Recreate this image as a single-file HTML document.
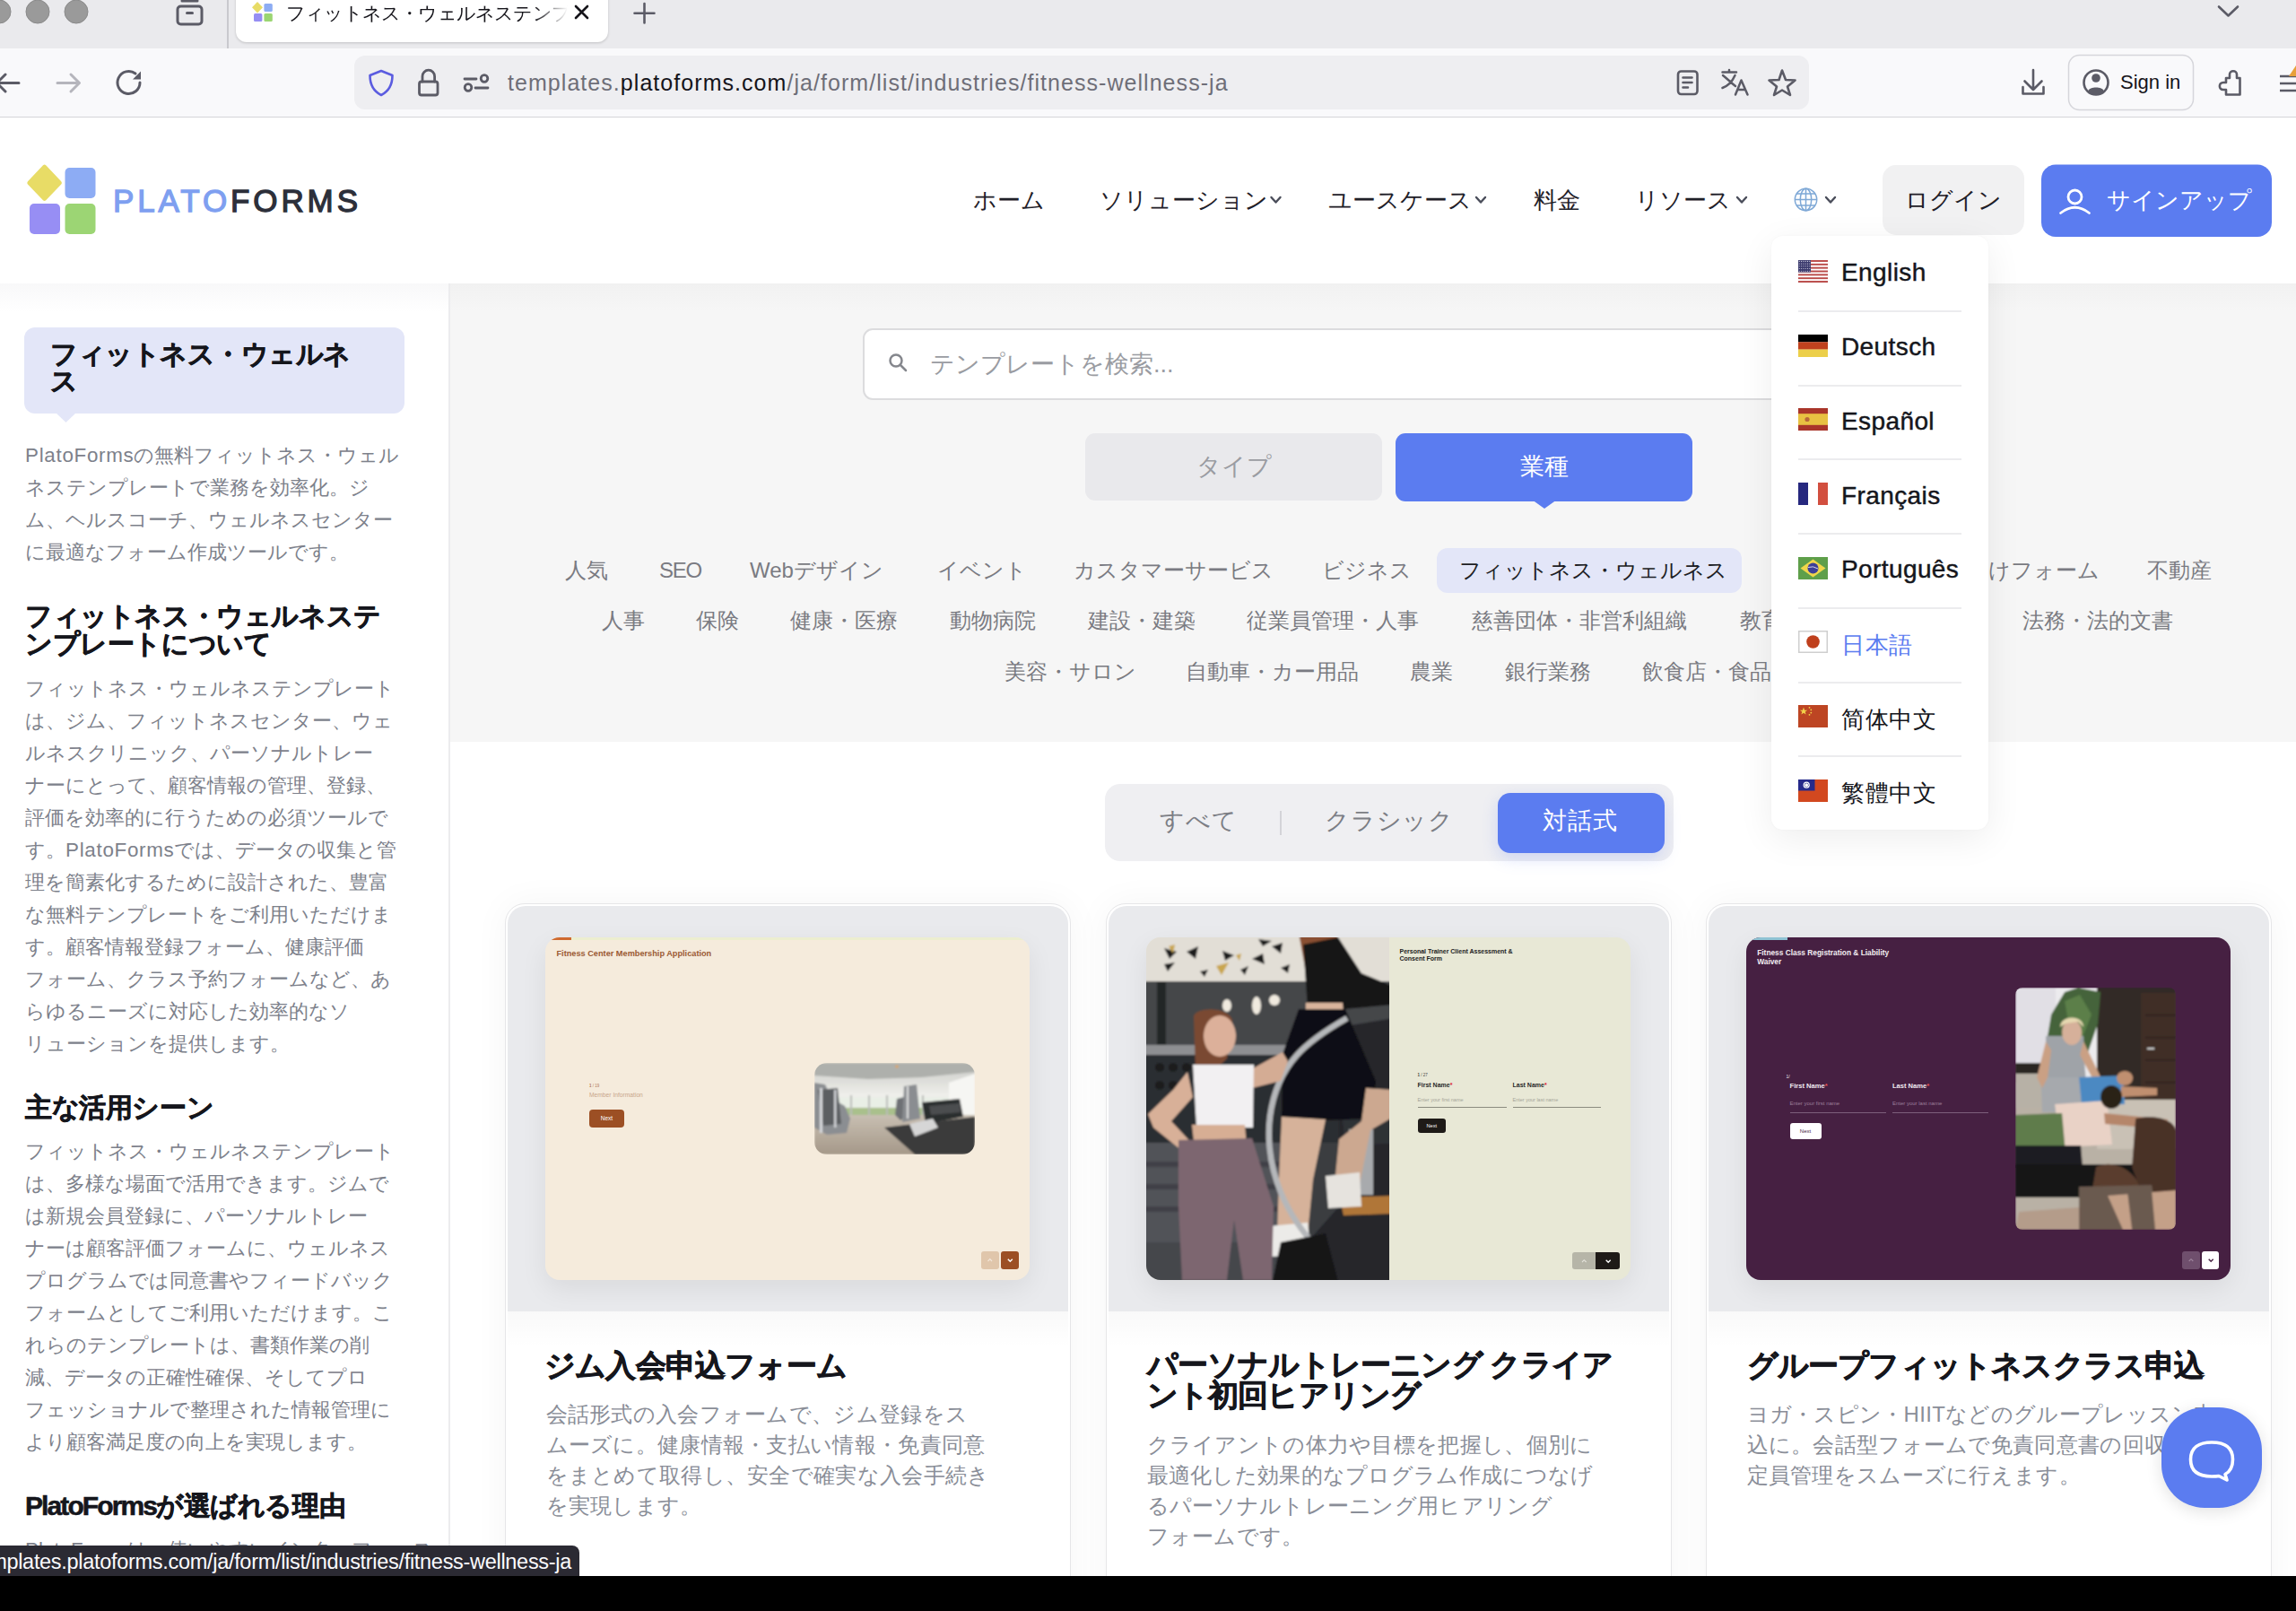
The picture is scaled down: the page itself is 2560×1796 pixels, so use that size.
<!DOCTYPE html>
<html><head><meta charset="utf-8">
<style>
*{box-sizing:border-box;margin:0;padding:0}
html,body{width:2560px;height:1796px;overflow:hidden;background:#fff}
body{position:relative;font-family:"Liberation Sans",sans-serif;color:#1d1d22}
.a{position:absolute}
.nw{white-space:nowrap}
.sp{font-size:22.4px;line-height:36px;color:#7d818b}
.tg{font-size:24px;line-height:32px;color:#7a7b82}
.tg span{top:0}
.dl{font-size:28px;line-height:34px;-webkit-text-stroke:0.45px currentColor;letter-spacing:0.4px}
.sh{font-size:30px;line-height:31px;font-weight:bold;color:#15161c;letter-spacing:-0.4px;-webkit-text-stroke:0.6px #15161c}
</style></head><body>

<!-- ===== Browser chrome ===== -->
<div class="a" style="left:0;top:0;width:2560px;height:54px;background:#eaeaed"></div>
<div class="a" style="left:0;top:54px;width:2560px;height:76px;background:#f9f9fb"></div>
<div class="a" style="left:0;top:130px;width:2560px;height:1px;background:#d4d4d8"></div>
<!-- tab -->
<div class="a" style="left:263px;top:-14px;width:415px;height:61px;background:#fff;border-radius:12px;box-shadow:0 1px 3px rgba(0,0,0,.18)"></div>
<svg class="a" style="left:0;top:0" width="2560" height="131" viewBox="0 0 2560 131">
 <g fill="#9a9a9a" stroke="#8a8a8a" stroke-width="1">
  <circle cx="-1" cy="13" r="13"/><circle cx="42" cy="13" r="13"/><circle cx="85" cy="13" r="13"/>
 </g>
 <g fill="none" stroke="#5b5b66" stroke-width="3" stroke-linecap="round" stroke-linejoin="round">
  <rect x="198" y="7" width="27" height="20" rx="3.5"/>
  <path d="M203 1 L220 1"/>
  <path d="M208.5 14.5 L214.5 14.5"/>
 </g>
 <rect x="253" y="0" width="2" height="54" fill="#c9c9ce"/>
 <!-- favicon -->
 <path d="M287 2 L293 8.2 L287 14.4 L281 8.2 Z" fill="#e8dc66"/>
 <rect x="294.4" y="3.9" width="9.4" height="9" rx="1.5" fill="#8dacf3"/>
 <rect x="283" y="15" width="9.4" height="9" rx="1.5" fill="#968ef3"/>
 <rect x="294.4" y="15" width="9.4" height="9" rx="1.5" fill="#9bd572"/>
 <!-- close x -->
 <path d="M642 7 L655 20 M655 7 L642 20" stroke="#15141a" stroke-width="2.6" stroke-linecap="round"/>
 <!-- plus -->
 <path d="M718.5 4 V25.5 M707.5 14.7 H729.5" stroke="#5b5b66" stroke-width="2.6" stroke-linecap="round"/>
 <!-- top right chevron -->
 <path d="M2474 7.5 L2484.5 17.5 L2495 7.5" fill="none" stroke="#5b5b66" stroke-width="2.6" stroke-linecap="round" stroke-linejoin="round"/>
 <!-- back / forward / reload -->
 <g fill="none" stroke-width="3" stroke-linecap="round" stroke-linejoin="round">
  <path d="M21 92.5 H-2 M6 83 L-3.5 92.5 L6 102" stroke="#5b5b66"/>
  <path d="M64 92.5 H88 M79 83 L88.5 92.5 L79 102" stroke="#b5b5bc"/>
  <path d="M156 92 A12.5 12.5 0 1 1 151 82" stroke="#5b5b66"/>
 </g>
 <path d="M157 79.5 L157 88.5 L148 88.5 Z" fill="#5b5b66"/>
 <!-- address bar -->
 <rect x="395" y="62" width="1622" height="60" rx="12" fill="#eeeef1"/>
 <path d="M425 79 L437.5 84 C437.5 95 433 102 425 106 C417 102 412.5 95 412.5 84 Z" fill="none" stroke="#5b5ce0" stroke-width="2.6" stroke-linejoin="round"/>
 <g fill="none" stroke="#5b5b66" stroke-width="2.8" stroke-linecap="round" stroke-linejoin="round">
  <rect x="467.5" y="91" width="20.5" height="15" rx="2.5"/>
  <path d="M471 91 V85 A6.8 6.8 0 0 1 484.6 85 V91"/>
  <path d="M518 88 H531 M530 98 H544"/>
  <circle cx="540" cy="87.5" r="3.8"/>
  <circle cx="522" cy="97.5" r="3.8"/>
 </g>
 <!-- right urlbar icons -->
 <g fill="none" stroke="#5b5b66" stroke-width="2.6" stroke-linecap="round" stroke-linejoin="round">
  <rect x="1871" y="79.5" width="21.5" height="25.5" rx="3.5"/>
  <path d="M1876.5 86.5 H1886.5 M1876.5 92 H1886.5 M1876.5 97.5 H1882"/>
  <path d="M1972.5 89.5 L1983.5 89 L1987 78.5 L1991 89 L2001.5 89.5 L1993 96.5 L1996 106 L1987 100.5 L1978 106 L1981 96.5 Z"/>
  <path d="M2267 78 V99 M2257.5 90.5 L2267 100 L2276.5 90.5 M2255.5 97 V104.5 H2278.5 V97"/>
 </g>
 <g fill="none" stroke="#5b5b66" stroke-width="2.5" stroke-linecap="round" stroke-linejoin="round">
  <path d="M1920.5 80.5 H1936 M1928 78 V80.5 M1921 84 C1926 88 1931 93 1935 96 M1934.5 84 C1931 92 1926 96 1920.5 98"/>
  <path d="M1935 105.5 L1941.5 89.5 L1948.5 105.5 M1937.5 100 H1946"/>
 </g>
 <!-- sign in button -->
 <rect x="2306.5" y="61.5" width="139" height="61" rx="12" fill="#f9f9fb" stroke="#d6d6db" stroke-width="1.5"/>
 <circle cx="2337" cy="92" r="13.5" fill="none" stroke="#5b5b66" stroke-width="2.6"/>
 <circle cx="2337" cy="87" r="4.8" fill="#5b5b66"/>
 <path d="M2328 101.5 C2330 96 2344 96 2346 101.5 A13 13 0 0 1 2328 101.5 Z" fill="#5b5b66"/>
 <!-- extensions -->
 <path d="M2482 87 H2486 V83 C2486 78 2494 78 2494 83 V87 H2497.5 V105.5 H2482 V100 H2479 C2473.5 100 2473.5 92 2479 92 H2482 Z" fill="none" stroke="#5b5b66" stroke-width="2.6" stroke-linejoin="round"/>
 <!-- menu -->
 <path d="M2542 85 H2560 M2542 93 H2560 M2542 101 H2560" stroke="#5b5b66" stroke-width="2.6"/>
 <path d="M2552 85 L2560 73 L2560 85 Z" fill="#e8a03a"/>
</svg>
<div class="a nw" style="left:319px;top:1px;width:314px;height:27px;overflow:hidden;font-size:21px;line-height:27px;letter-spacing:-0.8px;color:#15141a;-webkit-mask-image:linear-gradient(to right,#000 88%,transparent 100%)">フィットネス・ウェルネステンプレート</div>
<div class="a nw" style="left:566px;top:75px;font-size:25px;line-height:34px;color:#6e6e78;letter-spacing:1.05px">templates.<span style="color:#15141a">platoforms.com</span>/ja/form/list/industries/fitness-wellness-ja</div>
<div class="a nw" style="left:2364px;top:77px;font-size:22px;line-height:30px;color:#15141a">Sign in</div>

<!-- ===== Header ===== -->
<div class="a" style="left:0;top:131px;width:2560px;height:185px;background:#fff"></div>
<svg class="a" style="left:0;top:131px" width="2560" height="185" viewBox="0 131 2560 185">
 <path d="M49.6 184 Q50.5 183.2 51.4 184 L68.4 201.9 Q69.3 202.9 68.4 203.9 L51.4 221.6 Q50.5 222.5 49.6 221.6 L32.6 203.9 Q31.7 202.9 32.6 201.9 Z" fill="#e8dc66" stroke="#e8dc66" stroke-width="2" stroke-linejoin="round" transform="translate(-0.9 1)"/>
 <rect x="72.5" y="187" width="34" height="34" rx="5" fill="#8dacf4"/>
 <rect x="33" y="227" width="34" height="34" rx="5" fill="#978ef4"/>
 <rect x="72.5" y="227" width="34" height="34" rx="5" fill="#9cd574"/>
 <!-- chevrons -->
 <g fill="none" stroke="#4a4d5a" stroke-width="2.4" stroke-linecap="round" stroke-linejoin="round">
  <path d="M1417.5 220 L1422.5 225.5 L1427.5 220"/>
  <path d="M1646 220 L1651 225.5 L1656 220"/>
  <path d="M1937 220 L1942 225.5 L1947 220"/>
  <path d="M2036 220 L2041 225.5 L2046 220"/>
 </g>
 <!-- globe -->
 <g fill="none" stroke="#7ea8d6" stroke-width="1.5">
  <circle cx="2013.5" cy="222.5" r="12.2"/>
  <ellipse cx="2013.5" cy="222.5" rx="6.2" ry="12.2"/>
  <path d="M2001.5 222.5 H2025.5 M2003 216 H2024 M2003 229 H2024 M2013.5 210.5 V234.5"/>
 </g>
 <!-- buttons -->
 <rect x="2099" y="184" width="158" height="78" rx="15" fill="#f1f1f2"/>
 <rect x="2276" y="183.5" width="257" height="80.5" rx="16" fill="#5b7cf0"/>
 <g fill="none" stroke="#fff" stroke-width="2.8" stroke-linecap="round">
  <circle cx="2313.5" cy="219.5" r="7.5"/>
  <path d="M2297.5 237.5 Q2313.5 225 2329.5 237.5"/>
 </g>
</svg>
<div class="a nw" style="left:126px;top:204px;font-size:35px;line-height:40px;letter-spacing:3.9px;-webkit-text-stroke:1.3px currentColor;color:#7e9ff0">PLATO<span style="color:#2c2f3a">FORMS</span></div>
<div class="a nw" style="top:207px;font-size:26px;line-height:32px;color:#1f2028">
 <span class="a" style="left:1085px">ホーム</span>
 <span class="a" style="left:1226px">ソリューション</span>
 <span class="a" style="left:1481px">ユースケース</span>
 <span class="a" style="left:1710px">料金</span>
 <span class="a" style="left:1823px">リソース</span>
 <span class="a" style="left:2124px">ログイン</span>
 <span class="a" style="left:2349px;color:#fff">サインアップ</span>
</div>

<!-- ===== Sidebar ===== -->
<div class="a" style="left:0;top:316px;width:500px;height:1480px;background:#fff"></div>
<div class="a" style="left:0;top:316px;width:500px;height:32px;background:linear-gradient(#f8f8f9,rgba(255,255,255,0))"></div>
<div class="a" style="left:500px;top:316px;width:2px;height:1480px;background:#ececee"></div>
<div class="a" style="left:27px;top:365px;width:424px;height:96px;background:#e3e6f8;border-radius:12px"></div>
<svg class="a" style="left:60px;top:460px" width="28" height="12"><path d="M2 0 L13.5 11 L25 0 Z" fill="#e3e6f8"/></svg>
<div class="a" style="left:56px;top:380px;font-size:30px;line-height:30px;font-weight:bold;color:#15161c;letter-spacing:-0.5px;-webkit-text-stroke:0.6px #15161c">フィットネス・ウェルネ<br>ス</div>
<div class="a nw sp" style="left:28px;top:490px"><span style="letter-spacing:0.7px">PlatoForms</span>の無料フィットネス・ウェル<br>ネステンプレートで業務を効率化。ジ<br>ム、ヘルスコーチ、ウェルネスセンター<br>に最適なフォーム作成ツールです。</div>
<div class="a nw sh" style="left:28px;top:671px">フィットネス・ウェルネステ<br>ンプレートについて</div>
<div class="a nw sp" style="left:28px;top:750px">フィットネス・ウェルネステンプレート<br>は、ジム、フィットネスセンター、ウェ<br>ルネスクリニック、パーソナルトレー<br>ナーにとって、顧客情報の管理、登録、<br>評価を効率的に行うための必須ツールで<br>す。<span style="letter-spacing:0.7px">PlatoForms</span>では、データの収集と管<br>理を簡素化するために設計された、豊富<br>な無料テンプレートをご利用いただけま<br>す。顧客情報登録フォーム、健康評価<br>フォーム、クラス予約フォームなど、あ<br>らゆるニーズに対応した効率的なソ<br>リューションを提供します。</div>
<div class="a nw sh" style="left:28px;top:1219px">主な活用シーン</div>
<div class="a nw sp" style="left:28px;top:1266px">フィットネス・ウェルネステンプレート<br>は、多様な場面で活用できます。ジムで<br>は新規会員登録に、パーソナルトレー<br>ナーは顧客評価フォームに、ウェルネス<br>プログラムでは同意書やフィードバック<br>フォームとしてご利用いただけます。こ<br>れらのテンプレートは、書類作業の削<br>減、データの正確性確保、そしてプロ<br>フェッショナルで整理された情報管理に<br>より顧客満足度の向上を実現します。</div>
<div class="a nw sh" style="left:28px;top:1663px"><span style="letter-spacing:-1.9px">PlatoForms</span>が選ばれる理由</div>
<div class="a nw sp" style="left:28px;top:1710px">PlatoFormsは、使いやすいインターフェース</div>

<!-- ===== Main ===== -->
<div class="a" style="left:502px;top:316px;width:2058px;height:511px;background:linear-gradient(#f1f1f1,#f6f6f6 30px)"></div>
<div class="a" style="left:502px;top:827px;width:2058px;height:969px;background:#fff"></div>
<!-- search -->
<div class="a" style="left:962px;top:366px;width:1174px;height:80px;background:#fff;border:2px solid #dcdcde;border-radius:11px"></div>
<svg class="a" style="left:988px;top:391px" width="28" height="28"><g fill="none" stroke="#85878d" stroke-width="2.5" stroke-linecap="round"><circle cx="11" cy="11" r="6.5"/><path d="M16 16 L22 22"/></g></svg>
<div class="a nw" style="left:1037px;top:390px;font-size:27px;line-height:32px;color:#9a9ca2">テンプレートを検索...</div>
<!-- type / industry tabs -->
<div class="a" style="left:1210px;top:483px;width:331px;height:75px;background:#e9e9ec;border-radius:11px"></div>
<div class="a" style="left:1556px;top:483px;width:331px;height:76px;background:#5b7cf0;border-radius:11px"></div>
<svg class="a" style="left:1706px;top:557px" width="32" height="12"><path d="M2 0 L16 10 L30 0 Z" fill="#5b7cf0"/></svg>
<div class="a nw" style="left:1210px;top:502px;width:331px;text-align:center;font-size:27px;line-height:36px;color:#9a9ca2">タイプ</div>
<div class="a nw" style="left:1556px;top:502px;width:331px;text-align:center;font-size:27px;line-height:36px;color:#fff">業種</div>
<!-- tags -->
<div class="a" style="left:1602px;top:611px;width:340px;height:50px;background:#e3e6f8;border-radius:12px"></div>
<div class="a nw tg" style="top:620px">
 <span class="a" style="left:630px">人気</span>
 <span class="a" style="left:735px;letter-spacing:-1.2px">SEO</span>
 <span class="a" style="left:836px">Webデザイン</span>
 <span class="a" style="left:1045px">イベント</span>
 <span class="a" style="left:1197px">カスタマーサービス</span>
 <span class="a" style="left:1474px">ビジネス</span>
 <span class="a" style="left:1627px;color:#1d1e24">フィットネス・ウェルネス</span>
 <span class="a" style="left:2169px">受付けフォーム</span>
 <span class="a" style="left:2394px">不動産</span>
</div>
<div class="a nw tg" style="top:676px">
 <span class="a" style="left:671px">人事</span>
 <span class="a" style="left:776px">保険</span>
 <span class="a" style="left:881px">健康・医療</span>
 <span class="a" style="left:1059px">動物病院</span>
 <span class="a" style="left:1213px">建設・建築</span>
 <span class="a" style="left:1390px">従業員管理・人事</span>
 <span class="a" style="left:1641px">慈善団体・非営利組織</span>
 <span class="a" style="left:1940px">教育</span>
 <span class="a" style="left:2255px">法務・法的文書</span>
</div>
<div class="a nw tg" style="top:733px">
 <span class="a" style="left:1120px">美容・サロン</span>
 <span class="a" style="left:1322px">自動車・カー用品</span>
 <span class="a" style="left:1572px">農業</span>
 <span class="a" style="left:1678px">銀行業務</span>
 <span class="a" style="left:1831px">飲食店・食品</span>
</div>

<!-- toggle -->
<div class="a" style="left:1232px;top:874px;width:634px;height:86px;background:#efeff2;border-radius:17px"></div>
<div class="a" style="left:1670px;top:884px;width:186px;height:67px;background:#5b7cf0;border-radius:14px;box-shadow:0 6px 18px rgba(91,124,240,.22)"></div>
<div class="a" style="left:1427px;top:904px;width:2px;height:27px;background:#d3d3d8"></div>
<div class="a nw" style="top:898px;font-size:27px;line-height:34px;color:#7c7e85;letter-spacing:0.8px">
 <span class="a" style="left:1293px">すべて</span>
 <span class="a" style="left:1477px">クラシック</span>
 <span class="a" style="left:1720px;color:#fff">対話式</span>
</div>
<!-- CARDS -->
<style>
.card{position:absolute;top:1007px;width:631px;height:820px;background:#fff;border:1.5px solid #e6e6e8;border-radius:22px;box-shadow:0 0 40px rgba(0,0,0,.045)}
.prev{position:absolute;left:2px;top:2px;right:2px;height:452px;background:#e9eaed;border-radius:20px 20px 0 0}
.pin{position:absolute;left:43.5px;top:36.5px;width:540px;height:382px;border-radius:16px;overflow:hidden;box-shadow:0 10px 30px rgba(0,0,0,.07)}
.ctl{position:absolute;font-size:34px;line-height:34px;font-weight:bold;color:#15161c;letter-spacing:-0.8px;-webkit-text-stroke:0.7px #15161c;white-space:nowrap}
.cds{position:absolute;font-size:24px;line-height:34px;color:#8a8e98;letter-spacing:0.3px;white-space:nowrap}
.fx{position:absolute;white-space:nowrap;font-family:"Liberation Sans",sans-serif}
</style>
<div class="card" style="left:563px">
 <div class="prev"></div>
 <div class="a" style="left:2px;top:454px;right:2px;height:40px;background:linear-gradient(rgba(0,0,0,.025),rgba(0,0,0,0))"></div>
 <div class="pin" style="background:#f5ebdc" id="p1"><div class="a" style="left:0;top:0;width:540px;height:3px;background:#eceecf"></div>
 <div class="a" style="left:0;top:0;width:29px;height:3px;background:#cf6a30"></div>
 <div class="fx" style="left:13px;top:12px;font-size:9.2px;line-height:12px;font-weight:bold;color:#9b5a34">Fitness Center Membership Application</div>
 <div class="fx" style="left:49.5px;top:163px;font-size:4.5px;line-height:6px;color:#b07a58"><b>1</b> / 19</div>
 <div class="fx" style="left:49.5px;top:171px;font-size:6.7px;line-height:9px;color:#c9a68c">Member Information</div>
 <div class="a" style="left:49.5px;top:192px;width:39px;height:20px;background:#9c4f24;border-radius:4px"></div>
 <div class="fx" style="left:49.5px;top:196px;width:39px;text-align:center;font-size:6.5px;line-height:12px;color:#fff">Next</div>
 <svg class="a" style="left:300px;top:140.5px" width="179" height="102" viewBox="0 0 179 102">
  <defs><clipPath id="c1"><rect width="179" height="102" rx="14"/></clipPath>
  <linearGradient id="g1a" x1="0" y1="0" x2="0" y2="1"><stop offset="0" stop-color="#c9cac6"/><stop offset="0.35" stop-color="#eeeeea"/><stop offset="1" stop-color="#f4f4f0"/></linearGradient>
  <linearGradient id="g1f" x1="0" y1="0" x2="0" y2="1"><stop offset="0" stop-color="#c8bfb2"/><stop offset="1" stop-color="#a59889"/></linearGradient></defs>
  <g clip-path="url(#c1)"><g filter="url(#bl3)">
   <rect width="179" height="102" fill="url(#g1a)"/>
   <path d="M0 0 H179 V10 L120 16 L60 18 L0 14 Z" fill="#aeb0ac"/>
   <rect x="0" y="38" width="179" height="18" fill="#e9efe6"/>
   <rect x="0" y="50" width="179" height="8" fill="#a9c08c"/>
   <g fill="#b9bcb8"><rect x="40" y="36" width="2" height="22"/><rect x="60" y="36" width="2" height="22"/><rect x="80" y="36" width="2" height="22"/><rect x="120" y="36" width="2" height="22"/><rect x="150" y="36" width="2" height="22"/></g>
   <path d="M150 22 L179 12 V62 L150 58 Z" fill="#f6f6f3"/>
   <path d="M0 58 H179 V102 H0 Z" fill="url(#g1f)"/>
   <path d="M78 72 L179 60 V102 H112 Z" fill="#3a3a3b"/>
   <path d="M0 22 L12 24 L20 40 L34 48 L40 62 L36 78 L14 80 L0 72 Z" fill="#8b8e92"/>
   <path d="M4 30 L26 28 L30 68 L10 70 Z" fill="#5b5e62"/>
   <rect x="6" y="28" width="3" height="50" fill="#d5d7da"/>
   <rect x="22" y="30" width="2.5" height="42" fill="#d0d2d5"/>
   <path d="M92 40 L100 38 L104 58 L96 64 L90 58 Z" fill="#6e7175"/>
   <path d="M100 26 L114 24 L118 62 L98 66 Z" fill="#8a8d91"/>
   <rect x="103" y="26" width="2" height="36" fill="#dcdcdc"/>
   <path d="M120 44 L162 40 L166 60 L124 68 Z" fill="#2c2d2f"/>
   <path d="M128 48 L162 45 L163 55 L130 58 Z" fill="#4b4d50"/>
   <path d="M106 68 L132 62 L138 72 L112 82 Z" fill="#d6d6d6"/>
   <circle cx="92" cy="4" r="1.5" fill="#e8a050"/>
  </g>
 </g></svg>
 <div class="a" style="left:486.5px;top:350.5px;width:19.5px;height:19.8px;background:#e0c6ab;border-radius:3px"></div>
 <div class="a" style="left:508.6px;top:350.5px;width:19.5px;height:19.8px;background:#9c4f24;border-radius:3px"></div>
 <svg class="a" style="left:486.5px;top:350.5px" width="42" height="20"><path d="M7.5 11 L9.8 8.7 L12 11" stroke="#f3e6d8" stroke-width="1.2" fill="none"/><path d="M29.8 8.8 L32.3 11.3 L34.8 8.8" stroke="#fff" stroke-width="1.5" fill="none"/></svg></div>
 <div class="ctl" style="left:43px;top:497px">ジム入会申込フォーム</div>
 <div class="cds" style="left:44.5px;top:552px">会話形式の入会フォームで、ジム登録をス<br>ムーズに。健康情報・支払い情報・免責同意<br>をまとめて取得し、安全で確実な入会手続き<br>を実現します。</div>
</div>
<div class="card" style="left:1233px">
 <div class="prev"></div>
 <div class="a" style="left:2px;top:454px;right:2px;height:40px;background:linear-gradient(rgba(0,0,0,.025),rgba(0,0,0,0))"></div>
 <div class="pin" style="background:#e8e8d6" id="p2"><svg class="a" style="left:0;top:0" width="271" height="382" viewBox="0 0 271 382">
  <defs><filter id="bl2" x="-5%" y="-5%" width="110%" height="110%"><feGaussianBlur stdDeviation="1.1"/></filter></defs>
  <g filter="url(#bl2)">
  <rect x="-5" y="-5" width="281" height="392" fill="#3a3c41"/>
  <rect x="-5" y="-5" width="281" height="54" fill="#e2ded6"/>
  <g fill="#1e1e1e"><path d="M20 12 L34 16 L26 24Z"/><path d="M45 16 L58 10 L55 24Z"/><path d="M85 15 L98 20 L88 26Z"/><path d="M118 24 L130 18 L132 30Z"/><path d="M20 30 L32 28 L24 38Z"/><path d="M140 10 L152 6 L150 18Z"/><path d="M105 36 L114 32 L110 42Z"/><path d="M60 38 L69 36 L65 44Z"/><path d="M150 34 L160 30 L158 40Z"/><path d="M125 2 L140 4 L130 10Z"/></g>
  <g fill="#c9a650"><path d="M78 32 L92 28 L84 42Z"/><path d="M25 10 L32 8 L30 18Z"/><path d="M100 20 L106 18 L104 26Z"/></g>
  <rect x="-5" y="49" width="281" height="82" fill="#45464a"/>
  <rect x="12" y="49" width="10" height="82" fill="#242528"/>
  <rect x="-5" y="120" width="281" height="12" fill="#8e8f92"/>
  <g fill="#f0eadf"><ellipse cx="90" cy="76" rx="5" ry="7"/><ellipse cx="123" cy="76" rx="5" ry="10"/><ellipse cx="143" cy="70" rx="6" ry="6"/><ellipse cx="60" cy="92" rx="3" ry="8"/></g>
  <rect x="-5" y="131" width="281" height="98" fill="#2c2d31"/>
  <g fill="#1a1b1e"><circle cx="15" cy="145" r="5"/><circle cx="30" cy="145" r="5"/><circle cx="45" cy="145" r="5"/><circle cx="15" cy="165" r="5"/><circle cx="30" cy="165" r="5"/></g>
  <rect x="-5" y="229" width="160" height="160" fill="#515358"/>
  <g fill="#3f4146"><rect x="-5" y="250" width="160" height="6"/><rect x="-5" y="275" width="160" height="6"/><rect x="-5" y="300" width="160" height="6"/></g>
  <rect x="-5" y="340" width="160" height="50" fill="#45474c"/>
  <!-- machine right -->
  <path d="M215 100 L276 90 V387 H150 L175 345 L215 300 Z" fill="#26272b"/>
  <path d="M220 180 L276 176 V195 L218 198 Z" fill="#c08040"/>
  <path d="M218 197 L276 195 V230 L222 232 Z" fill="#2e3036"/>
  <path d="M216 290 L276 288 V308 L220 310 Z" fill="#b07638"/>
  <rect x="226" y="214" width="27" height="73" fill="#a8aaad"/>
  <!-- woman 2 -->
  <path d="M170 -5 H214 L208 44 L180 50 Z" fill="#8a5030"/>
  <path d="M175 8 L214 0 L240 40 L276 55 V75 L220 80 L180 80 Z" fill="#131315"/>
  <path d="M178 73 L219 73 L220 84 L178 84 Z" fill="#d8b49c"/>
  <path d="M170 80 L222 80 L256 160 L255 202 L200 204 L151 200 L152 130 Z" fill="#101012"/>
  <path d="M151 200 L200 203 L186 270 L180 331 L146 331 L148 270 Z" fill="#d6b29a"/>
  <path d="M245 168 L276 170 V200 L250 215 L238 275 L210 275 L215 225 L240 205 Z" fill="#cca890"/>
  <path d="M136 322 L180 318 L184 354 L138 356 Z" fill="#ecebe8"/>
  <path d="M200 266 L238 262 L240 300 L203 302 Z" fill="#e6e3de"/>
  <path d="M224 90 C180 115 146 140 138 200 C132 250 150 300 185 340" fill="none" stroke="#b5b7ba" stroke-width="6.5"/>
  <path d="M150 340 L200 330 L215 387 H140 Z" fill="#141416"/>
  <!-- woman 1 -->
  <path d="M53 88 C55 78 90 76 96 92 L90 135 L75 150 L55 150 Z" fill="#7a4a30"/>
  <ellipse cx="82" cy="110" rx="18" ry="23" fill="#dcb09a"/>
  <path d="M46 150 L30 170 L2 197 L8 212 L40 238 L56 235 L28 205 L52 178 Z" fill="#d8b098"/>
  <path d="M110 151 L152 128 L158 138 L150 160 L118 168 Z" fill="#d4ac94"/>
  <path d="M52 142 L120 142 L119 212 L56 212 Z" fill="#f2f0f2"/>
  <path d="M51 209 L110 209 L112 234 L54 236 Z" fill="#d7ae94"/>
  <path d="M36 226 L118 224 L142 300 L140 382 H108 L98 315 L90 382 H40 L36 300 Z" fill="#7d6670"/>
  </g>
 </svg>
 <div class="fx" style="left:283px;top:12px;font-size:7px;line-height:8.6px;font-weight:bold;color:#222">Personal Trainer Client Assessment &amp;<br>Consent Form</div>
 <div class="fx" style="left:303px;top:151px;font-size:4.5px;line-height:6px;color:#444"><b>1</b> / 27</div>
 <div class="fx" style="left:303px;top:160px;font-size:7px;line-height:9px;font-weight:bold;color:#2a2a2a">First Name<span style="color:#d23">*</span></div>
 <div class="fx" style="left:409px;top:160px;font-size:7px;line-height:9px;font-weight:bold;color:#2a2a2a">Last Name<span style="color:#d23">*</span></div>
 <div class="fx" style="left:303px;top:178px;font-size:5.5px;line-height:7px;color:#a5a598">Enter your first name</div>
 <div class="fx" style="left:409px;top:178px;font-size:5.5px;line-height:7px;color:#a5a598">Enter your last name</div>
 <div class="a" style="left:303px;top:189.5px;width:99px;height:1px;background:#8c8c80"></div>
 <div class="a" style="left:409px;top:189.5px;width:98.6px;height:1px;background:#8c8c80"></div>
 <div class="a" style="left:303px;top:202px;width:31.7px;height:16.3px;background:#1e1a17;border-radius:3px"></div>
 <div class="fx" style="left:303px;top:205px;width:31.7px;text-align:center;font-size:5.6px;line-height:10px;color:#fff">Next</div>
 <div class="a" style="left:475px;top:351px;width:26.5px;height:19.3px;background:#b6b5a8;border-radius:3px 0 0 3px"></div>
 <div class="a" style="left:501.5px;top:351px;width:26.5px;height:19.3px;background:#1e1a17;border-radius:0 3px 3px 0"></div>
 <svg class="a" style="left:475px;top:351px" width="53" height="20"><path d="M11 11 L13.3 8.7 L15.6 11" stroke="#e4e3da" stroke-width="1.1" fill="none"/><path d="M37.7 8.8 L40.2 11.3 L42.7 8.8" stroke="#fff" stroke-width="1.4" fill="none"/></svg></div>
 <div class="ctl" style="left:44.5px;top:496px">パーソナルトレーニング クライア<br>ント初回ヒアリング</div>
 <div class="cds" style="left:44.5px;top:586px">クライアントの体力や目標を把握し、個別に<br>最適化した効果的なプログラム作成につなげ<br>るパーソナルトレーニング用ヒアリング<br>フォームです。</div>
</div>
<div class="card" style="left:1902px">
 <div class="prev"></div>
 <div class="a" style="left:2px;top:454px;right:2px;height:40px;background:linear-gradient(rgba(0,0,0,.025),rgba(0,0,0,0))"></div>
 <div class="pin" style="background:#462042" id="p3"><div class="a" style="left:3px;top:0;width:43px;height:3px;background:#8fc3d4"></div>
 <div class="fx" style="left:12.7px;top:12.5px;font-size:8.35px;line-height:10px;font-weight:bold;color:#f2edf2">Fitness Class Registration &amp; Liability<br>Waiver</div>
 <div class="fx" style="left:45px;top:152px;font-size:5px;line-height:7px;color:#e8e0e8">1/</div>
 <div class="fx" style="left:49px;top:161px;font-size:7.6px;line-height:10px;font-weight:bold;color:#efe8ef">First Name<span style="color:#e55">*</span></div>
 <div class="fx" style="left:163.4px;top:161px;font-size:7.6px;line-height:10px;font-weight:bold;color:#efe8ef">Last Name<span style="color:#e55">*</span></div>
 <div class="fx" style="left:49px;top:181px;font-size:6px;line-height:8px;color:#9c7f9a">Enter your first name</div>
 <div class="fx" style="left:163.4px;top:181px;font-size:6px;line-height:8px;color:#9c7f9a">Enter your last name</div>
 <div class="a" style="left:49px;top:195px;width:107px;height:1px;background:#7d5f7b"></div>
 <div class="a" style="left:163.4px;top:195px;width:107px;height:1px;background:#7d5f7b"></div>
 <div class="a" style="left:49px;top:207px;width:35px;height:18.5px;background:#fff;border-radius:3px"></div>
 <div class="fx" style="left:49px;top:211px;width:35px;text-align:center;font-size:6px;line-height:10px;color:#462042">Next</div>
 <svg class="a" style="left:300px;top:56.8px" width="179.2" height="270" viewBox="0 0 179 270">
  <defs><clipPath id="c3"><rect width="179" height="270" rx="8"/></clipPath><filter id="bl3"><feGaussianBlur stdDeviation="0.9"/></filter></defs>
  <g clip-path="url(#c3)"><g filter="url(#bl3)">
   <rect width="179" height="270" fill="#b9b1a5"/>
   <rect x="0" y="0" width="91" height="130" fill="#e1dfe5"/>
   <rect x="45" y="0" width="46" height="130" fill="#ecebee"/>
   <rect x="91" y="0" width="88" height="125" fill="#302a26"/>
   <rect x="140" y="6" width="39" height="120" fill="#3f2f27"/>
   <g fill="#2a211c"><rect x="145" y="30" width="34" height="1.5"/><rect x="145" y="55" width="34" height="1.5"/><rect x="145" y="80" width="34" height="1.5"/><rect x="145" y="105" width="34" height="1.5"/></g>
   <rect x="147" y="67" width="8" height="2" fill="#c8c8c8"/>
   <path d="M40 30 L55 5 L70 0 L95 5 L92 40 L80 75 L62 90 L45 80 L35 60 Z" fill="#44643a"/>
   <path d="M55 15 L72 8 L85 30 L75 55 L60 45 Z" fill="#5b7f48"/>
   <rect x="0" y="84" width="28" height="22" fill="#2a2624"/>
   <rect x="0" y="96" width="34" height="38" fill="#b7b1a6"/>
   <rect x="91" y="125" width="88" height="55" fill="#c9c1b5"/>
   <path d="M28 93 L78 93 L80 139 L30 139 Z" fill="#a6a9ad"/>
   <path d="M34 54 L76 54 L78 100 L34 100 Z" fill="#9fa3a8"/>
   <ellipse cx="63" cy="50" rx="11" ry="14" fill="#d6b09a"/>
   <path d="M50 44 C50 30 76 30 76 44 L70 38 L56 40 Z" fill="#e6d8b0"/>
   <path d="M34 60 L24 100 L30 112 L36 100 L40 70 Z" fill="#caa084"/>
   <path d="M76 60 L100 110 L95 118 L72 75 Z" fill="#caa084"/>
   <path d="M71 100 L120 98 L122 130 L74 132 Z" fill="#4b89c2"/>
   <ellipse cx="122" cy="101" rx="9" ry="8" fill="#c08f70"/>
   <path d="M118 110 L158 112 L158 120 L118 122 Z" fill="#c08f70"/>
   <path d="M44 130 L102 126 L108 175 L50 178 Z" fill="#e9d2c6"/>
   <ellipse cx="107" cy="122" rx="12" ry="13" fill="#2c2019"/>
   <path d="M99 140 L170 147 L168 158 L100 152 Z" fill="#b5866a"/>
   <path d="M0 142 L52 140 L56 185 L40 192 L0 180 Z" fill="#5f7b4b"/>
   <path d="M0 176 L73 176 L75 201 L0 201 Z" fill="#1e1d20"/>
   <path d="M0 197 L140 197 L140 234 L0 234 Z" fill="#151417"/>
   <rect x="0" y="234" width="179" height="36" fill="#b9b1a5"/>
   <path d="M4 250 L71 245 L71 270 L0 270 Z" fill="#b49c8a"/>
   <path d="M90 200 C110 190 134 205 140 224 L103 240 L85 230 Z" fill="#5a3e2e"/>
   <path d="M134 146 C160 140 179 150 179 160 V230 L140 228 L130 200 Z" fill="#4a3226"/>
   <path d="M71 222 L152 220 L160 270 H71 Z" fill="#6a5a50"/>
   <path d="M103 232 L179 226 V270 H120 Z" fill="#c4a088"/>
   <path d="M125 228 L152 226 L156 270 L130 270 Z" fill="#6a5a50"/>
  </g>
 </g></svg>
 <div class="a" style="left:486px;top:350.8px;width:20px;height:19.7px;background:#6f4f6d;border-radius:3px"></div>
 <div class="a" style="left:508.4px;top:350.8px;width:19.6px;height:19.7px;background:#fff;border-radius:3px"></div>
 <svg class="a" style="left:486px;top:350.8px" width="42" height="20"><path d="M7.7 11 L10 8.7 L12.3 11" stroke="#9e849c" stroke-width="1.1" fill="none"/><path d="M29.7 8.8 L32.2 11.3 L34.7 8.8" stroke="#462042" stroke-width="1.5" fill="none"/></svg></div>
 <div class="ctl" style="left:44.5px;top:497px">グループフィットネスクラス申込</div>
 <div class="cds" style="left:44.5px;top:552px">ヨガ・スピン・HIITなどのグループレッスン申<br>込に。会話型フォームで免責同意書の回収や<br>定員管理をスムーズに行えます。</div>
</div>
<!-- chat -->
<div class="a" style="left:2410px;top:1569px;width:112px;height:112px;background:#5b7cf0;border-radius:48px;box-shadow:0 4px 18px rgba(0,0,0,.12)"></div>
<svg class="a" style="left:2410px;top:1569px" width="112" height="112" viewBox="0 0 112 112"><path d="M56 39 C70 39 79.5 44.5 79.5 58 C79.5 67 76 72 71 74.5 L73 81 L64 76.5 C61.5 77 59 77 56 77 C42 77 32.5 71.5 32.5 58 C32.5 44.5 42 39 56 39 Z" fill="none" stroke="#fff" stroke-width="3.6" stroke-linejoin="round"/></svg>
<!-- DROPDOWN -->
<div class="a" style="left:1975px;top:263px;width:242px;height:662px;background:#fff;border-radius:13px;box-shadow:0 10px 40px rgba(0,0,0,.07),0 0 3px rgba(0,0,0,.03)"></div>
<svg class="a" style="left:2005px;top:290px" width="33" height="25" viewBox="0 0 33 25"><rect width="33" height="25" fill="#fff"/><rect y="0.00" width="33" height="1.92" fill="#b94a48"/><rect y="3.85" width="33" height="1.92" fill="#b94a48"/><rect y="7.69" width="33" height="1.92" fill="#b94a48"/><rect y="11.54" width="33" height="1.92" fill="#b94a48"/><rect y="15.38" width="33" height="1.92" fill="#b94a48"/><rect y="19.23" width="33" height="1.92" fill="#b94a48"/><rect y="23.08" width="33" height="1.92" fill="#b94a48"/><rect width="14" height="13.5" fill="#3c3b6e"/><circle cx="1.3" cy="1.4" r="0.55" fill="#d8d8e8"/><circle cx="3.6" cy="1.4" r="0.55" fill="#d8d8e8"/><circle cx="5.9" cy="1.4" r="0.55" fill="#d8d8e8"/><circle cx="8.2" cy="1.4" r="0.55" fill="#d8d8e8"/><circle cx="10.5" cy="1.4" r="0.55" fill="#d8d8e8"/><circle cx="12.8" cy="1.4" r="0.55" fill="#d8d8e8"/><circle cx="1.3" cy="4.1" r="0.55" fill="#d8d8e8"/><circle cx="3.6" cy="4.1" r="0.55" fill="#d8d8e8"/><circle cx="5.9" cy="4.1" r="0.55" fill="#d8d8e8"/><circle cx="8.2" cy="4.1" r="0.55" fill="#d8d8e8"/><circle cx="10.5" cy="4.1" r="0.55" fill="#d8d8e8"/><circle cx="12.8" cy="4.1" r="0.55" fill="#d8d8e8"/><circle cx="1.3" cy="6.8" r="0.55" fill="#d8d8e8"/><circle cx="3.6" cy="6.8" r="0.55" fill="#d8d8e8"/><circle cx="5.9" cy="6.8" r="0.55" fill="#d8d8e8"/><circle cx="8.2" cy="6.8" r="0.55" fill="#d8d8e8"/><circle cx="10.5" cy="6.8" r="0.55" fill="#d8d8e8"/><circle cx="12.8" cy="6.8" r="0.55" fill="#d8d8e8"/><circle cx="1.3" cy="9.5" r="0.55" fill="#d8d8e8"/><circle cx="3.6" cy="9.5" r="0.55" fill="#d8d8e8"/><circle cx="5.9" cy="9.5" r="0.55" fill="#d8d8e8"/><circle cx="8.2" cy="9.5" r="0.55" fill="#d8d8e8"/><circle cx="10.5" cy="9.5" r="0.55" fill="#d8d8e8"/><circle cx="12.8" cy="9.5" r="0.55" fill="#d8d8e8"/><circle cx="1.3" cy="12.2" r="0.55" fill="#d8d8e8"/><circle cx="3.6" cy="12.2" r="0.55" fill="#d8d8e8"/><circle cx="5.9" cy="12.2" r="0.55" fill="#d8d8e8"/><circle cx="8.2" cy="12.2" r="0.55" fill="#d8d8e8"/><circle cx="10.5" cy="12.2" r="0.55" fill="#d8d8e8"/><circle cx="12.8" cy="12.2" r="0.55" fill="#d8d8e8"/></svg>
<div class="a nw dl" style="left:2053px;top:287px;color:#15161c">English</div>
<div class="a" style="left:2005px;top:346px;width:182px;height:2px;background:#ececee"></div>
<svg class="a" style="left:2005px;top:373px" width="33" height="25" viewBox="0 0 33 25"><rect width="33" height="8.4" fill="#000"/><rect y="8.3" width="33" height="8.4" fill="#c0421e"/><rect y="16.6" width="33" height="8.4" fill="#eccf4a"/></svg>
<div class="a nw dl" style="left:2053px;top:370px;color:#15161c">Deutsch</div>
<div class="a" style="left:2005px;top:429px;width:182px;height:2px;background:#ececee"></div>
<svg class="a" style="left:2005px;top:455px" width="33" height="25" viewBox="0 0 33 25"><rect width="33" height="25" fill="#a9352a"/><rect y="6.2" width="33" height="12.6" fill="#e8c142"/><circle cx="10" cy="12.5" r="2.6" fill="#b8673a"/></svg>
<div class="a nw dl" style="left:2053px;top:453px;color:#15161c">Español</div>
<div class="a" style="left:2005px;top:511px;width:182px;height:2px;background:#ececee"></div>
<svg class="a" style="left:2005px;top:538px" width="33" height="25" viewBox="0 0 33 25"><rect width="33" height="25" fill="#fff"/><rect width="11" height="25" fill="#26287e"/><rect x="22" width="11" height="25" fill="#d24f3f"/></svg>
<div class="a nw dl" style="left:2053px;top:536px;color:#15161c">Français</div>
<div class="a" style="left:2005px;top:594px;width:182px;height:2px;background:#ececee"></div>
<svg class="a" style="left:2005px;top:621px" width="33" height="25" viewBox="0 0 33 25"><rect width="33" height="25" fill="#5e9f4a"/><path d="M16.5 2.5 L30.5 12.5 L16.5 22.5 L2.5 12.5 Z" fill="#f0d64a"/><circle cx="16.5" cy="12.5" r="6" fill="#3d3f97"/><path d="M11 11.5 Q16.5 9.5 22 13" stroke="#e8e8f0" stroke-width="0.9" fill="none"/></svg>
<div class="a nw dl" style="left:2053px;top:618px;color:#15161c">Português</div>
<div class="a" style="left:2005px;top:677px;width:182px;height:2px;background:#ececee"></div>
<svg class="a" style="left:2005px;top:703px" width="33" height="25" viewBox="0 0 33 25"><rect x="0.75" y="0.75" width="31.5" height="23.5" fill="#fff" stroke="#cfcfcf" stroke-width="1.5"/><circle cx="16.5" cy="12.5" r="7.3" fill="#bf3f1c"/></svg>
<div class="a nw" style="left:2053px;top:702px;font-size:26px;line-height:34px;color:#5b7cf0;letter-spacing:0.5px">日本語</div>
<div class="a" style="left:2005px;top:760px;width:182px;height:2px;background:#ececee"></div>
<svg class="a" style="left:2005px;top:786px" width="33" height="25" viewBox="0 0 33 25"><rect width="33" height="25" fill="#bd4523"/><path d="M6 2.6 L7.1 5.7 L10.2 5.7 L7.7 7.6 L8.6 10.5 L6 8.7 L3.4 10.5 L4.3 7.6 L1.8 5.7 L4.9 5.7 Z" fill="#f2d34a"/><circle cx="12.5" cy="2.8" r="0.9" fill="#f2d34a"/><circle cx="14.3" cy="5.3" r="0.9" fill="#f2d34a"/><circle cx="14.3" cy="8.6" r="0.9" fill="#f2d34a"/><circle cx="12.5" cy="10.8" r="0.9" fill="#f2d34a"/></svg>
<div class="a nw" style="left:2053px;top:785px;font-size:26px;line-height:34px;color:#15161c;letter-spacing:0.5px">简体中文</div>
<div class="a" style="left:2005px;top:842px;width:182px;height:2px;background:#ececee"></div>
<svg class="a" style="left:2005px;top:869px" width="33" height="25" viewBox="0 0 33 25"><rect width="33" height="25" fill="#d2481f"/><rect width="18.5" height="12.5" fill="#262a8a"/><circle cx="9.2" cy="6.2" r="3.6" fill="#fff"/><circle cx="9.2" cy="6.2" r="2.4" fill="#262a8a"/><circle cx="9.2" cy="6.2" r="1.9" fill="#fff"/></svg>
<div class="a nw" style="left:2053px;top:867px;font-size:26px;line-height:34px;color:#15161c;letter-spacing:0.5px">繁體中文</div>
<!-- ===== Status bar / bottom ===== -->
<div class="a" style="left:-10px;top:1723px;width:656px;height:40px;background:#2b2a33;border-radius:0 8px 0 0"></div>
<div class="a" style="left:0;top:1723px;width:646px;height:34px;overflow:hidden"><span class="a nw" style="right:9px;top:3px;font-size:23.5px;line-height:30px;color:#fbfbfe;letter-spacing:-0.3px">templates.platoforms.com/ja/form/list/industries/fitness-wellness-ja</span></div>
<div class="a" style="left:0;top:1757px;width:2560px;height:39px;background:#000"></div>
</body></html>
